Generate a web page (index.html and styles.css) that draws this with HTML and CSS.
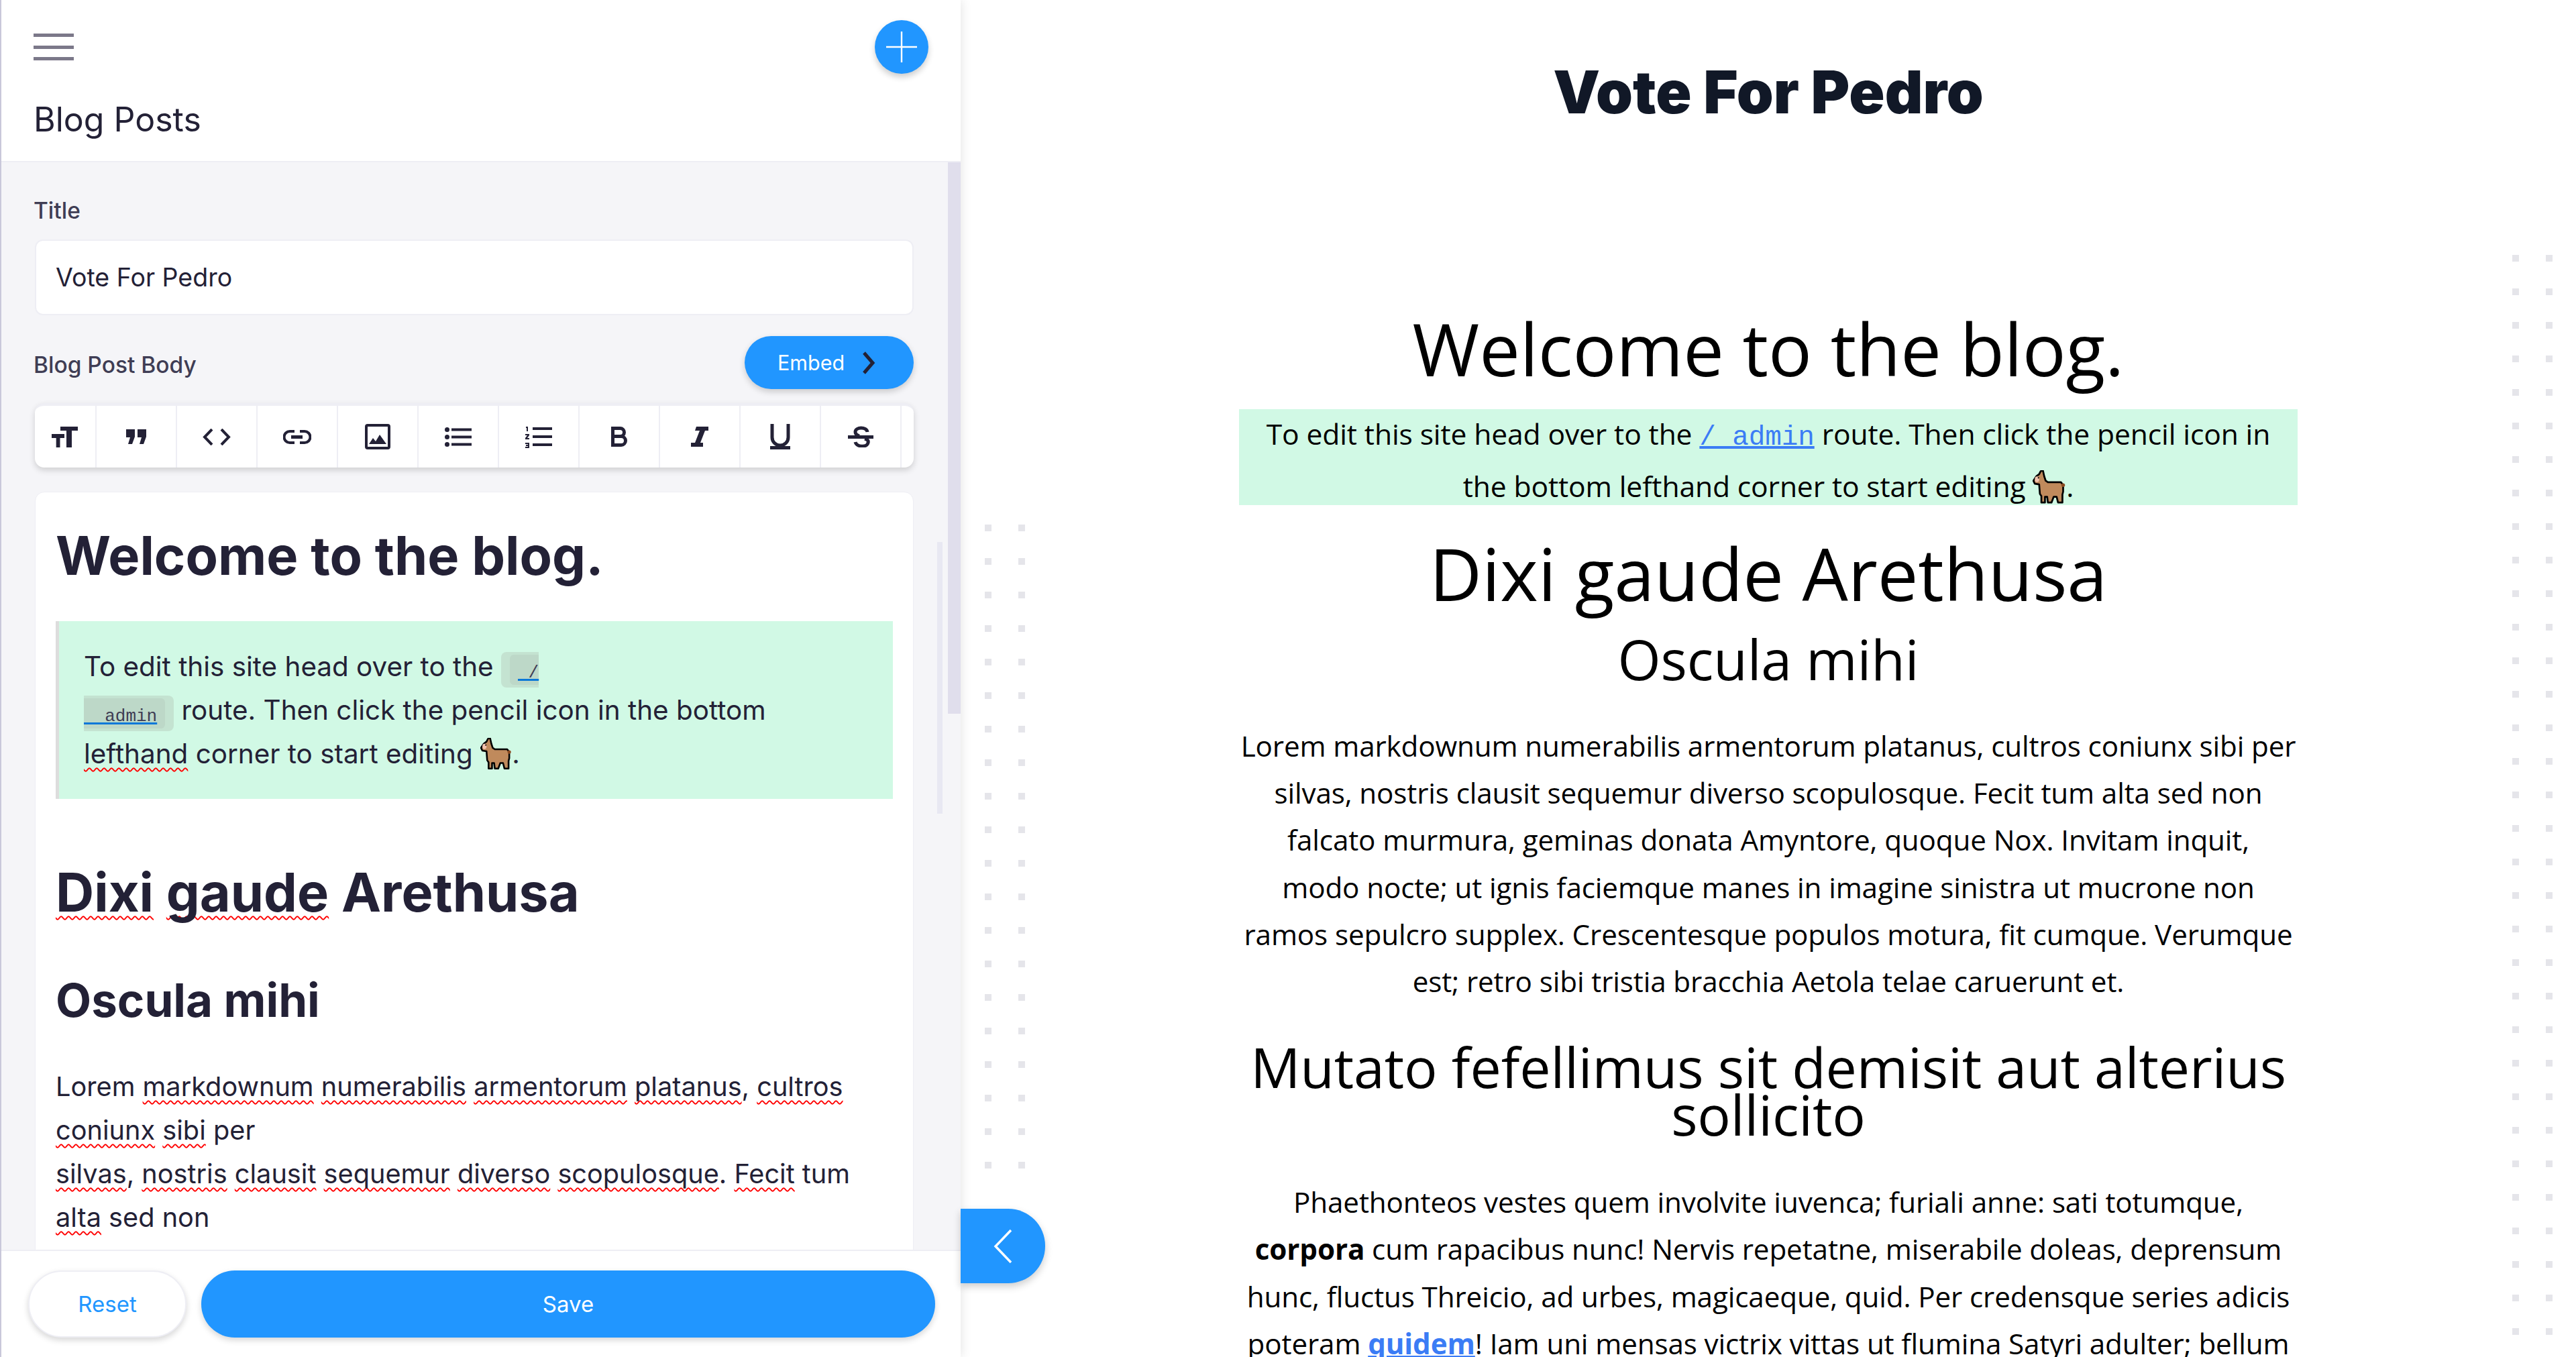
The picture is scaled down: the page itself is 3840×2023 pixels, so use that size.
FILE: index.html
```html
<!DOCTYPE html>
<html lang="en">
<head>
  <meta charset="UTF-8" />
  <meta name="viewport" content="width=device-width, initial-scale=1.0" />
  <title>Blog Posts</title>
  <link rel="stylesheet" href="styles.css">
</head>
<body>
  <div class="app">
    <aside class="panel">
      <header class="panel-head">
        <div class="head-row">
          <button class="menu-btn" aria-label="Menu"><span></span><span></span><span></span></button>
          <button class="add-btn" aria-label="Add">
            <svg viewBox="0 0 46 46" width="46" height="46"><path d="M23 0v46M0 23h46" stroke="#fff" stroke-width="2.4"/></svg>
          </button>
        </div>
        <h1 class="panel-title">Blog Posts</h1>
      </header>

      <div class="form">
        <label class="label title-label">Title</label>
        <div class="input">Vote For Pedro</div>

        <div class="body-row">
          <label class="label">Blog Post Body</label>
          <button class="embed-btn">Embed
            <svg viewBox="0 0 20 34" width="20" height="34"><path d="M3 2l13 15L3 32" fill="none" stroke="#232136" stroke-width="5"/></svg>
          </button>
        </div>

        <div class="toolbar">
          <div class="tool first">
            <svg viewBox="0 0 40 31" width="40" height="31" fill="#232136"><path d="M13 0h26v6h-9v25h-8V6h-9zM0 11h19v6h-6.500v14H6.700V17H0z"/></svg>
          </div>
          <div class="tool">
            <svg viewBox="0 0 30 22" width="30" height="22" fill="#232136"><path d="M0 0h13v11l-4 11H3l3-10H0zM17 0h13v11l-4 11h-6l3-10h-6z"/></svg>
          </div>
          <div class="tool">
            <svg viewBox="0 0 42 25" width="42" height="25" fill="none" stroke="#232136" stroke-width="4"><path d="M14 1L3 12.500 14 24M28 1l11 11.500L28 24"/></svg>
          </div>
          <div class="tool">
            <svg viewBox="0 0 42 21" width="42" height="21" fill="none" stroke="#232136" stroke-width="4"><path d="M17 2h-7a8.500 8.500 0 0 0 0 17h7M25 2h7a8.500 8.500 0 0 1 0 17h-7"/><path d="M12 10.500h17" stroke-width="5"/></svg>
          </div>
          <div class="tool">
            <svg viewBox="0 0 38 38" width="38" height="38"><rect x="2" y="2" width="34" height="34" rx="2" fill="none" stroke="#232136" stroke-width="4"/><path d="M6 30l6-9 4 5 6-10 10 14z" fill="#232136"/></svg>
          </div>
          <div class="tool">
            <svg viewBox="0 0 40 29" width="40" height="29" fill="#232136"><circle cx="3.500" cy="3.500" r="3.500"/><circle cx="3.500" cy="14.500" r="3.500"/><circle cx="3.500" cy="25.500" r="3.500"/><path d="M10 1.500h30v4H10zM10 12.500h30v4H10zM10 23.500h30v4H10z"/></svg>
          </div>
          <div class="tool">
            <svg viewBox="0 0 40 34" width="40" height="34" fill="#232136"><path d="M11 3h29v4H11zM11 15h29v4H11zM11 27h29v4H11z"/><path d="M1 2h3v7H2V4H1zM0 13h6v2l-3 4h3v2H0v-2l3-4H0zM0 26h6v8H0v-2h4v-1H1v-2h3v-1H0z"/></svg>
          </div>
          <div class="tool">
            <svg viewBox="0 0 24 30" width="24" height="30"><path d="M2.500 2.500h11a6 6 0 0 1 0 12h-11zm0 12h12.500a6.500 6.500 0 0 1 0 13H2.500z" fill="none" stroke="#232136" stroke-width="5"/></svg>
          </div>
          <div class="tool">
            <svg viewBox="0 0 26 30" width="26" height="30" fill="#232136"><path d="M8 0h18v6h-5l-7 18h4v6H0v-6h6l7-18H6z"/></svg>
          </div>
          <div class="tool">
            <svg viewBox="0 0 30 38" width="30" height="38"><path d="M3 0v20a12 12 0 0 0 24 0V0" fill="none" stroke="#232136" stroke-width="5"/><path d="M0 33h30v5H0z" fill="#232136"/></svg>
          </div>
          <div class="tool">
            <svg viewBox="0 0 38 32" width="38" height="32"><path d="M29 9C28 1 11 1 11 9c0 3 3 5 6 6M25 19c4 1 6 3 5 6-1 7-17 7-19-1" fill="none" stroke="#232136" stroke-width="5"/><path d="M0 14h38v5H0z" fill="#232136"/></svg>
          </div>
        </div>

        <div class="editor">
          <h1 class="ed-h1">Welcome to the blog.</h1>
          <div class="ed-quote">
            <p>To edit this site head over to the <code class="chip chip-start"><span class="chip-in"><span class="chip-link">&nbsp;/</span></span></code><br>
            <code class="chip chip-end"><span class="chip-in"><span class="chip-link">&nbsp;&nbsp;admin</span></span></code> route. Then click the pencil icon in the bottom<br>
            <span class="typo">lefthand</span> corner to start editing <svg class="llama" viewBox="0 0 46 45" role="img" aria-label="llama"><path d="M11 1 9 5 5 8 1 14l2 4 6 1 1 13 2 3v9h5v-8h3l1 8h5l3-8h4l2 8h6V33l1-4v-9l-3-4H21l-3-2-2-6-2-9z" fill="#c08a5c" stroke="#000" stroke-width="2.500" stroke-linejoin="round"/><ellipse cx="6" cy="12" rx="3" ry="4" fill="#f3c3ae"/><circle cx="8" cy="10" r="1" fill="#000"/><circle cx="42" cy="20" r="2.500" fill="#8a4a20"/></svg>.</p>
          </div>
          <h2 class="ed-h2"><span class="typo">Dixi</span> <span class="typo">gaude</span> Arethusa</h2>
          <h3 class="ed-h3">Oscula mihi</h3>
          <p class="ed-p">Lorem <span class="typo">markdownum</span> <span class="typo">numerabilis</span> <span class="typo">armentorum</span> <span class="typo">platanus</span>, <span class="typo">cultros</span><br>
          <span class="typo">coniunx</span> <span class="typo">sibi</span> per<br>
          <span class="typo">silvas</span>, <span class="typo">nostris</span> <span class="typo">clausit</span> <span class="typo">sequemur</span> <span class="typo">diverso</span> <span class="typo">scopulosque</span>. <span class="typo">Fecit</span> tum<br>
          <span class="typo">alta</span> sed non</p>
        </div>
      </div>

      <footer class="panel-foot">
        <button class="btn-reset">Reset</button>
        <button class="btn-save">Save</button>
      </footer>

      <div class="scroll-outer"></div>
      <div class="scroll-inner"></div>
    </aside>

    <button class="toggle" aria-label="Collapse">
      <svg viewBox="0 0 30 52" width="30" height="52"><path d="M27 2L4 26l23 24" fill="none" stroke="#fff" stroke-width="3.500"/></svg>
    </button>

    <main class="preview">
      <div class="dots dots-left"></div>
      <div class="dots dots-right"></div>
      <h1 class="site-title">Vote For Pedro</h1>
      <article class="post">
        <h1 class="post-first">Welcome to the blog.</h1>
        <blockquote>To edit this site head over to the <a href="#"><code>/ admin</code></a> route. Then click the pencil icon in<br>the bottom lefthand corner to start editing <svg class="llama" viewBox="0 0 46 45" role="img" aria-label="llama"><path d="M11 1 9 5 5 8 1 14l2 4 6 1 1 13 2 3v9h5v-8h3l1 8h5l3-8h4l2 8h6V33l1-4v-9l-3-4H21l-3-2-2-6-2-9z" fill="#c08a5c" stroke="#000" stroke-width="2.500" stroke-linejoin="round"/><ellipse cx="6" cy="12" rx="3" ry="4" fill="#f3c3ae"/><circle cx="8" cy="10" r="1" fill="#000"/><circle cx="42" cy="20" r="2.500" fill="#8a4a20"/></svg>.</blockquote>
        <h1>Dixi gaude Arethusa</h1>
        <h2>Oscula mihi</h2>
        <p>Lorem markdownum numerabilis armentorum platanus, cultros coniunx sibi per<br>
        silvas, nostris clausit sequemur diverso scopulosque. Fecit tum alta sed non<br>
        falcato murmura, geminas donata Amyntore, quoque Nox. Invitam inquit,<br>
        modo nocte; ut ignis faciemque manes in imagine sinistra ut mucrone non<br>
        ramos sepulcro supplex. Crescentesque populos motura, fit cumque. Verumque<br>
        est; retro sibi tristia bracchia Aetola telae caruerunt et.</p>
        <h2 class="long">Mutato fefellimus sit demisit aut alterius sollicito</h2>
        <p class="after-long">Phaethonteos vestes quem involvite iuvenca; furiali anne: sati totumque, <strong>corpora</strong> cum rapacibus nunc! Nervis repetatne, miserabile doleas, deprensum hunc, fluctus Threicio, ad urbes, magicaeque, quid. Per credensque series adicis poteram <a href="#"><strong>quidem</strong></a>! Iam uni mensas victrix vittas ut flumina Satyri adulter; bellum</p>
      </article>
    </main>
  </div>
</body>
</html>
```

FILE: styles.css
```css
* {
  box-sizing: border-box;
}
html, body {
  margin: 0;
  height: 100%;
  overflow: hidden;
}
body {
  font-family: Inter, "Noto Sans", sans-serif;
  color: #232136;
  background: #fff;
}
button {
  font-family: inherit;
  border: none;
  cursor: pointer;
}
.app {
  position: relative;
  display: flex;
  height: 2023px;
  overflow: hidden;
}

/* left panel */
.panel {
  position: relative;
  flex: 0 0 1432px;
  display: flex;
  flex-direction: column;
  height: 100%;
  background: #f5f5f8;
  border-left: 2px solid #c9c8da;
  box-shadow: 0 0 16px rgba(0,0,0,0.12);
}
.panel-head {
  flex: 0 0 242px;
  background: #fff;
  border-bottom: 2px solid #eeeef4;
  padding: 30px 48px 0 48px;
}
.head-row {
  display: flex;
  justify-content: space-between;
  align-items: center;
  height: 80px;
}
.menu-btn {
  display: flex;
  flex-direction: column;
  justify-content: space-between;
  width: 60px;
  height: 40px;
  padding: 0;
  background: none;
}
.menu-btn span {
  height: 5px;
  background: #7b7889;
}
.add-btn {
  display: flex;
  align-items: center;
  justify-content: center;
  width: 80px;
  height: 80px;
  padding: 0;
  border-radius: 50%;
  background: #2196ff;
  box-shadow: 0 5px 10px rgba(0,0,0,0.2);
}
.panel-title {
  margin: 38px 0 0 0;
  font-size: 50px;
  line-height: 60px;
  font-weight: 400;
}
.form {
  flex: 1;
  min-height: 0;
  overflow: hidden;
  padding: 0 70px 0 50px;
}
.label {
  display: block;
  margin-left: -2px;
  font-size: 33.500px;
  font-weight: 500;
  color: #3f3d54;
}
.title-label {
  margin-top: 53px;
  line-height: 38px;
}
.input {
  margin-top: 24px;
  height: 113px;
  padding-left: 29px;
  font-size: 37.500px;
  line-height: 109px;
  background: #fff;
  border: 2px solid #eeeef4;
  border-radius: 12px;
}
.body-row {
  display: flex;
  justify-content: space-between;
  align-items: center;
  margin-top: 31px;
  height: 79px;
}
.body-row .label {
  margin-top: 6px;
}
.embed-btn {
  display: flex;
  align-items: center;
  gap: 26px;
  height: 79px;
  width: 252px;
  padding-left: 49px;
  font-size: 30.500px;
  color: #fff;
  background: #2196ff;
  border-radius: 40px;
  box-shadow: 0 4px 10px rgba(0,0,0,0.18);
}
.toolbar {
  display: flex;
  margin-top: 21px;
  height: 96px;
  background: #fff;
  border-top: 4px solid #eeeef4;
  border-radius: 14px;
  box-shadow: 0 4px 10px rgba(0,0,0,0.16);
}
.tool {
  flex: 0 0 120px;
  display: flex;
  align-items: center;
  justify-content: center;
  border-right: 2px solid #eeeef4;
}
.tool.first {
  flex-basis: 92px;
}
.editor {
  margin-top: 36px;
  height: 1400px;
  padding: 0 30px;
  background: #fff;
  border: 1px solid #eeeef4;
  border-radius: 14px;
}
.ed-h1 {
  margin: 46px 0 0;
  font-size: 79.200px;
  line-height: 96px;
  font-weight: 700;
}
.ed-quote {
  margin-top: 50px;
  height: 265px;
  padding: 35px 0 0 37px;
  background: #d1f9e5;
  border-left: 5px solid #dddddd;
}
.ed-quote p {
  margin: 0;
  font-size: 40.400px;
  line-height: 65px;
}
.chip {
  display: inline-block;
  vertical-align: -2px;
  height: 53px;
  padding: 4px 0;
  font-family: "Liberation Mono", monospace;
  font-size: 26px;
  line-height: 36px;
  background: #c4e3d1;
}
.chip-in {
  display: block;
  height: 45px;
  padding-top: 9px;
  color: #3f3d54;
  background: #bdd8c8;
  border-radius: 6px;
}
.chip-link {
  text-decoration: underline #0a78d8 3px;
  text-underline-offset: 2px;
}
.chip-start {
  padding-left: 13px;
  border-radius: 8px 0 0 8px;
}
.chip-start .chip-in {
  padding-left: 12px;
  border-radius: 6px 0 0 6px;
}
.chip-end {
  padding-right: 13px;
  border-radius: 0 8px 8px 0;
}
.chip-end .chip-in {
  padding-right: 12px;
  border-radius: 0 6px 6px 0;
}
.typo {
  text-decoration: underline wavy #f00 2px;
  text-underline-offset: 6px;
  text-decoration-skip-ink: none;
}
.llama {
  width: 1.17em;
  height: 1.17em;
  vertical-align: -0.24em;
}
.ed-h2 {
  margin: 91px 0 0;
  font-size: 79.200px;
  line-height: 96px;
  font-weight: 700;
}
.ed-h3 {
  margin: 72px 0 0;
  font-size: 69px;
  line-height: 82px;
  font-weight: 700;
}
.ed-p {
  margin: 56px 0 0;
  font-size: 39.700px;
  line-height: 65px;
}
.panel-foot {
  position: relative;
  z-index: 2;
  flex: 0 0 160px;
  display: flex;
  gap: 22px;
  padding: 29px 38px 0 40px;
  background: #fff;
  border-top: 2px solid #eeeef4;
}
.btn-reset, .btn-save {
  height: 100px;
  font-size: 33px;
  border-radius: 50px;
}
.btn-reset {
  flex: 0 0 236px;
  color: #2196ff;
  background: #fff;
  border: 2px solid #eeeef4;
  box-shadow: 0 4px 10px rgba(0,0,0,0.16);
}
.btn-save {
  flex: 1;
  color: #fff;
  background: #2196ff;
  box-shadow: 0 4px 10px rgba(0,0,0,0.16);
}
.scroll-outer {
  position: absolute;
  top: 242px;
  right: 0;
  width: 19px;
  height: 822px;
  background: #e0deec;
}
.scroll-inner {
  position: absolute;
  top: 808px;
  left: 1395px;
  width: 8px;
  height: 405px;
  background: #e8e8f2;
}
.toggle {
  position: absolute;
  z-index: 3;
  left: 1432px;
  top: 1802px;
  display: flex;
  align-items: center;
  justify-content: center;
  width: 126px;
  height: 111px;
  padding: 0;
  background: #2196ff;
  border-radius: 0 55px 55px 0;
  box-shadow: 0 5px 12px rgba(0,0,0,0.2);
}

/* right preview */
.preview {
  position: relative;
  flex: 1;
  min-width: 0;
  overflow: hidden;
  font-family: "Open Sans", sans-serif;
  color: #000;
}
.dots {
  position: absolute;
  width: 60px;
  background-image: repeating-linear-gradient(to bottom, #e5e5ea 0 10px, transparent 10px 50px);
  mask-image: repeating-linear-gradient(to right, #000 0 10px, transparent 10px 50px);
}
.dots-left {
  left: 36px;
  top: 782px;
  height: 961px;
}
.dots-right {
  left: 2313px;
  top: 380px;
  height: 1610px;
}
.site-title {
  margin: 87px 0 0;
  text-align: center;
  font-family: Inter, sans-serif;
  font-size: 88px;
  line-height: 100px;
  font-weight: 900;
  color: #111827;
}
.post {
  width: 1578px;
  margin: 0 auto;
  text-align: center;
  font-size: 42.200px;
  line-height: 70.200px;
  letter-spacing: -0.003em;
}
.post h1 {
  margin: 38px 0 0;
  font-size: 108px;
  line-height: 128px;
  font-weight: 400;
}
.post h1.post-first {
  margin-top: 243px;
  line-height: 180px;
}
.post blockquote {
  margin: 0;
  background: #d1f9e5;
  height: 143px;
  font-size: 42.600px;
  line-height: 72px;
}
.post code {
  font-family: "Liberation Mono", monospace;
  font-size: 41px;
}
.post a {
  color: #3b7cf5;
  text-decoration-thickness: 4px;
}
.post h2 {
  margin: 8px 0 0;
  font-size: 82.500px;
  line-height: 110px;
  font-weight: 400;
}
.post h2.long {
  margin-top: 57px;
  line-height: 71px;
}
.post p {
  margin: 40px 0 0;
}
.post p.after-long {
  margin-top: 60px;
}
```
